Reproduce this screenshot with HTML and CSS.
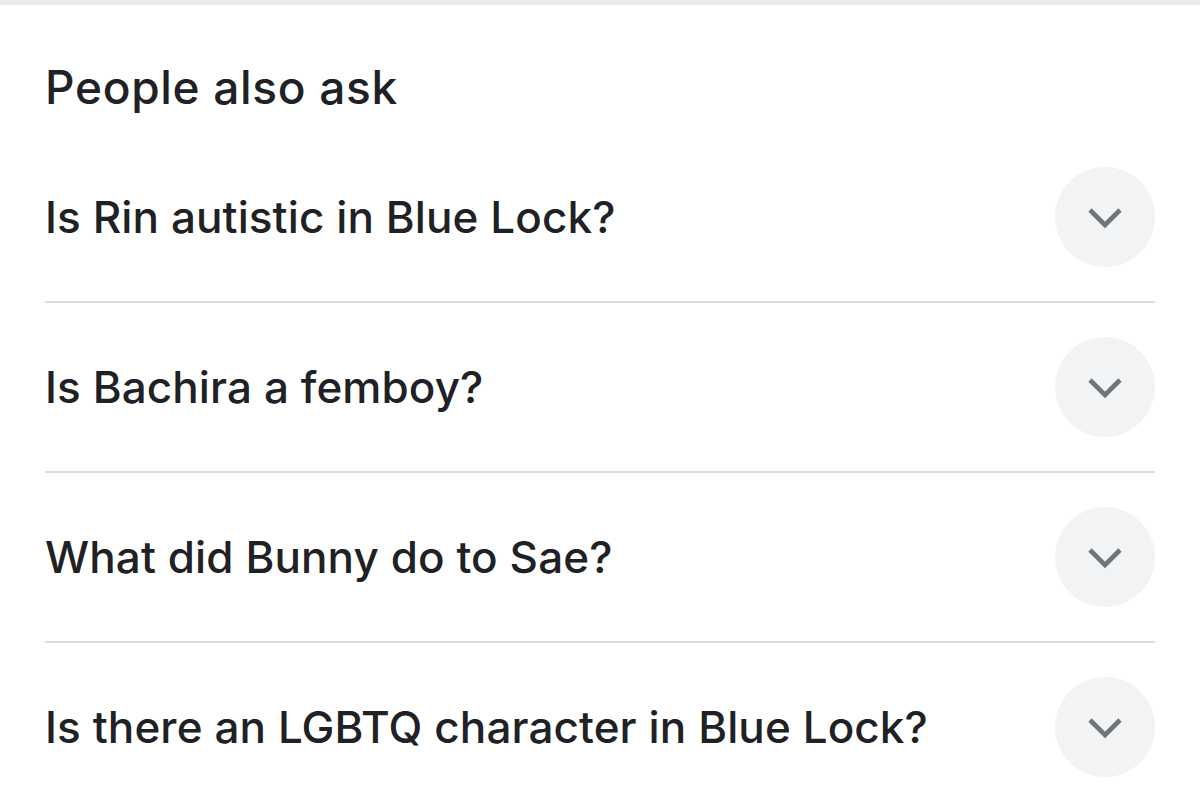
FILE: index.html
```html
<!DOCTYPE html>
<html lang="en">
<head>
<meta charset="utf-8">
<title>People also ask</title>
<link rel="stylesheet" href="styles.css">
</head>
<body>
<div class="topbar"></div>
<section class="paa">
  <h2 class="paa-title">People also ask</h2>
  <div class="paa-list">
    <div class="paa-item">
      <span class="paa-q">Is Rin autistic in Blue Lock?</span>
      <span class="paa-btn"><svg width="36" height="22" viewBox="0 0 36 22"><polyline points="3,3 18,18 33,3" fill="none" stroke="#70757a" stroke-width="4.6"/></svg></span>
    </div>
    <div class="paa-item">
      <span class="paa-q">Is Bachira a femboy?</span>
      <span class="paa-btn"><svg width="36" height="22" viewBox="0 0 36 22"><polyline points="3,3 18,18 33,3" fill="none" stroke="#70757a" stroke-width="4.6"/></svg></span>
    </div>
    <div class="paa-item">
      <span class="paa-q">What did Bunny do to Sae?</span>
      <span class="paa-btn"><svg width="36" height="22" viewBox="0 0 36 22"><polyline points="3,3 18,18 33,3" fill="none" stroke="#70757a" stroke-width="4.6"/></svg></span>
    </div>
    <div class="paa-item">
      <span class="paa-q">Is there an LGBTQ character in Blue Lock?</span>
      <span class="paa-btn"><svg width="36" height="22" viewBox="0 0 36 22"><polyline points="3,3 18,18 33,3" fill="none" stroke="#70757a" stroke-width="4.6"/></svg></span>
    </div>
  </div>
</section>
</body>
</html>
```

FILE: styles.css
```css
html, body {
  margin: 0;
  padding: 0;
  background: #ffffff;
}
body {
  font-family: Inter, Roboto, "Liberation Sans", sans-serif;
  color: #202124;
  overflow: hidden;
}
.topbar {
  height: 5px;
  background: #e8eaed;
}
.paa {
  padding: 0 45px;
}
.paa-title {
  margin: 0;
  padding-top: 54px;
  font-size: 46px;
  line-height: 56px;
  font-weight: 500;
  letter-spacing: 0.7px;
  margin-bottom: 18px;
}
.paa-item {
  display: flex;
  align-items: center;
  justify-content: space-between;
  height: 168px;
  border-bottom: 2px solid #dadce0;
}
.paa-item:last-child {
  border-bottom: none;
}
.paa-q {
  font-size: 44px;
  line-height: 56px;
  font-weight: 500;
  letter-spacing: 0.1px;
}
.paa-btn {
  width: 100px;
  height: 100px;
  border-radius: 50%;
  background: #f1f3f4;
  display: flex;
  align-items: center;
  justify-content: center;
}
.paa-btn svg {
  display: block;
  margin-top: 2px;
}
```
